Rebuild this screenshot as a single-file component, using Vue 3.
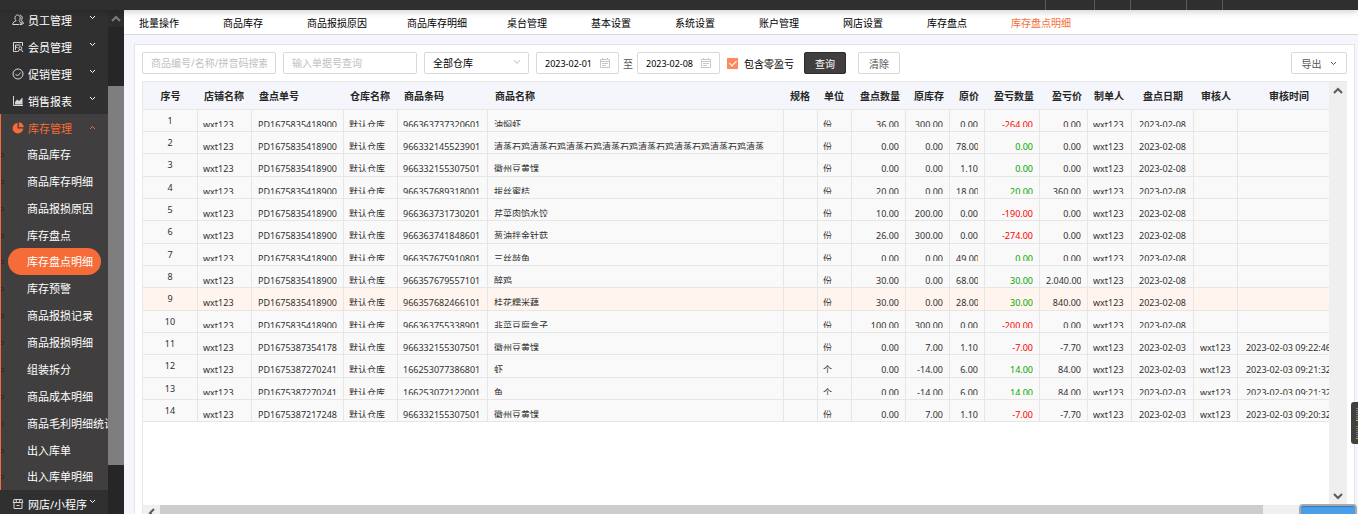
<script setup>
import { ref } from 'vue'

const groups = [
  { label: '员工管理', icon: 'users' },
  { label: '会员管理', icon: 'member' },
  { label: '促销管理', icon: 'check' },
  { label: '销售报表', icon: 'chart' },
  {
    label: '库存管理', icon: 'pie', open: true,
    items: ['商品库存', '商品库存明细', '商品报损原因', '库存盘点', '库存盘点明细', '库存预警', '商品报损记录', '商品报损明细', '组装拆分', '商品成本明细', '商品毛利明细统计', '出入库单', '出入库单明细'],
  },
  { label: '网店/小程序', icon: 'shop' },
]
const current = '库存盘点明细'
const tabs = ['批量操作', '商品库存', '商品报损原因', '商品库存明细', '桌台管理', '基本设置', '系统设置', '账户管理', '网店设置', '库存盘点', '库存盘点明细']

const goods = ref('')
const billNo = ref('')
const warehouse = ref('全部仓库')
const from = ref('2023-02-01')
const to = ref('2023-02-08')
const withZero = ref(true)

const columns = [
  { label: '序号', cls: 'c-seq', align: 'center' },
  { label: '店铺名称', cls: 'c-shop', align: 'left' },
  { label: '盘点单号', cls: 'c-bill', align: 'left', wide: true },
  { label: '仓库名称', cls: 'c-store', align: 'left' },
  { label: '商品条码', cls: 'c-code', align: 'left' },
  { label: '商品名称', cls: 'c-name', align: 'left', wide: true },
  { label: '规格', cls: 'c-spec', align: 'left' },
  { label: '单位', cls: 'c-unit', align: 'left' },
  { label: '盘点数量', cls: 'c-count', align: 'right', wide: true },
  { label: '原库存', cls: 'c-stock', align: 'right', wide: true },
  { label: '原价', cls: 'c-price', align: 'right', wide: true },
  { label: '盈亏数量', cls: 'c-diff', align: 'right', wide: true },
  { label: '盈亏价', cls: 'c-diffprice', align: 'right', wide: true },
  { label: '制单人', cls: 'c-maker', align: 'left' },
  { label: '盘点日期', cls: 'c-date', align: 'center' },
  { label: '审核人', cls: 'c-auditor', align: 'left', wide: true },
  { label: '审核时间', cls: 'c-time', align: 'center' },
]

const first = 'PD1675835418900'
const data = [
  [first, '966363737320601', '油焖虾', '份', '36.00', '300.00', '0.00', '-264.00', '0.00'],
  [first, '966332145523901', '清蒸石鸡清蒸石鸡清蒸石鸡清蒸石鸡清蒸石鸡清蒸石鸡清蒸石鸡清蒸', '份', '0.00', '0.00', '78.00', '0.00', '0.00'],
  [first, '966332155307501', '徽州豆黄馃', '份', '0.00', '0.00', '1.10', '0.00', '0.00'],
  [first, '966357689318001', '拔丝蜜桔', '份', '20.00', '0.00', '18.00', '20.00', '360.00'],
  [first, '966363731730201', '芹菜肉馅水饺', '份', '10.00', '200.00', '0.00', '-190.00', '0.00'],
  [first, '966363741848601', '葱油拌金针菇', '份', '26.00', '300.00', '0.00', '-274.00', '0.00'],
  [first, '966357675910801', '三丝敲鱼', '份', '0.00', '0.00', '49.00', '0.00', '0.00'],
  [first, '966357679557101', '醉鸡', '份', '30.00', '0.00', '68.00', '30.00', '2,040.00'],
  [first, '966357682466101', '桂花糯米藕', '份', '30.00', '0.00', '28.00', '30.00', '840.00'],
  [first, '966363755338901', '韭菜豆腐盒子', '份', '100.00', '300.00', '0.00', '-200.00', '0.00'],
  ['PD1675387354178', '966332155307501', '徽州豆黄馃', '份', '0.00', '7.00', '1.10', '-7.00', '-7.70', '2023-02-03 09:22:46'],
  ['PD1675387270241', '166253077386801', '虾', '个', '0.00', '-14.00', '6.00', '14.00', '84.00', '2023-02-03 09:21:32'],
  ['PD1675387270241', '166253072122001', '鱼', '个', '0.00', '-14.00', '6.00', '14.00', '84.00', '2023-02-03 09:21:32'],
  ['PD1675387217248', '966332155307501', '徽州豆黄馃', '份', '0.00', '7.00', '1.10', '-7.00', '-7.70', '2023-02-03 09:20:32'],
]
const rows = data.map((d, i) => [
  i + 1, 'wxt123', d[0], '默认仓库', d[1], d[2], '', d[3], d[4], d[5], d[6], d[7], d[8],
  'wxt123', d[9] ? '2023-02-03' : '2023-02-08', d[9] ? 'wxt123' : '', d[9] || '',
])
const tone = (value, index) => (index !== 11 ? '' : value.startsWith('-') ? 'loss' : 'gain')
</script>

<template>
  <div class="app">
    <header class="topbar">
      <i class="seg s1"></i><i class="seg s2"></i><i class="seg s3"></i><i class="seg s4"></i><i class="seg s5"></i>
    </header>
    <div class="body">
      <nav class="sidebar">
        <div v-for="g in groups" :key="g.label" class="group" :class="{ open: g.open }">
          <button type="button" class="group-btn">
            <svg class="icon" viewBox="0 0 12 12" fill="none" stroke="currentColor">
              <template v-if="g.icon === 'users'">
                <path d="M4.2 6.8C3.2 6 3 4.9 3 3.9 3 2.2 4.1 1 5.6 1s2.600 1.200 2.600 2.900c0 1-.3 2.100-1.200 2.900M4.200 6.800C2.300 7.400.8 8.300.7 10.500h6.500M7.800 1.200c1.500.1 2.400 1.200 2.400 2.700 0 1.100-.4 2-1.200 2.600 1.300.4 2.200 1.500 2.300 3.500M7.300 7.300l2.600 3.200M9.900 7.800v2.700H7.700" />
              </template>
              <template v-else-if="g.icon === 'member'">
                <path d="M10.500 5V1.500h-9v9h4M3.500 4h5M3.500 6.300h2M3.500 4v5" />
                <circle cx="8.300" cy="7.200" r="1.500" />
                <path d="M6 11c.2-1.600 1-2.300 2.300-2.300s2.200.7 2.400 2.300" />
              </template>
              <template v-else-if="g.icon === 'check'">
                <circle cx="6" cy="6" r="5" /><path d="M3.500 6l2 2 3.300-3.500" />
              </template>
              <template v-else-if="g.icon === 'chart'">
                <path d="M1.500 1v9.500H11" /><path d="M3 9.500V7l2.200-2.500L7 6l3.500-3.500v7z" fill="currentColor" stroke="none" />
              </template>
              <template v-else-if="g.icon === 'pie'">
                <path d="M5.500 1v5.500h5.700A5.300 5.300 0 1 1 5.500 1z" fill="currentColor" stroke="none" />
                <path d="M6.800.3a5.300 5.300 0 0 1 4.900 4.900H6.800z" fill="currentColor" stroke="none" />
              </template>
              <template v-else>
                <path d="M2 1.500h8l.8 3H1.200zM2 5v5.500h8V5M4.300 1.500v3M7.700 1.500v3M4.500 7.500h3" />
              </template>
            </svg>
            <span>{{ g.label }}</span>
            <svg class="caret" viewBox="0 0 7 5" fill="none" stroke="currentColor">
              <path :d="g.open ? 'M1 4l2.500-2.500L6 4' : 'M1 1l2.500 2.500L6 1'" />
            </svg>
          </button>
          <ul v-if="g.items">
            <li v-for="item in g.items" :key="item"><a href="#" :class="{ active: item === current }">{{ item }}</a></li>
          </ul>
        </div>
      </nav>
      <div class="side-scroll">
        <div class="side-up"><svg viewBox="0 0 10 7" fill="none" stroke="#7d7d7d" stroke-width="2"><path d="M1 6l4-4 4 4" /></svg></div>
        <div class="side-thumb"></div>
      </div>

      <main class="main">
        <nav class="tabs">
          <a v-for="t in tabs" :key="t" href="#" :class="{ active: t === current }">{{ t }}</a>
        </nav>
        <section class="card">
          <form class="filters" @submit.prevent>
            <input v-model="goods" class="field text" type="text" aria-label="商品" placeholder="商品编号/名称/拼音码搜索" />
            <input v-model="billNo" class="field text" type="text" aria-label="单据号" placeholder="输入单据号查询" />
            <div class="select-wrap">
              <select v-model="warehouse" class="field" aria-label="仓库"><option>全部仓库</option></select>
              <svg class="select-caret" viewBox="0 0 8 6" fill="none" stroke="#bfbfbf"><path d="M1 1l3 3.500L7 1" /></svg>
            </div>
            <div class="range">
              <div class="field date">
                <input v-model="from" type="text" aria-label="开始日期" />
                <svg viewBox="0 0 10 10" fill="none" stroke="#c8c8c8"><path d="M.5 1.500h9v8h-9zM.5 3.500h9M2.500 0v2M7.500 0v2M2 5.500h6M2 7.500h4" /></svg>
              </div>
              <span>至</span>
              <div class="field date">
                <input v-model="to" type="text" aria-label="结束日期" />
                <svg viewBox="0 0 10 10" fill="none" stroke="#c8c8c8"><path d="M.5 1.500h9v8h-9zM.5 3.500h9M2.500 0v2M7.500 0v2M2 5.500h6M2 7.500h4" /></svg>
              </div>
            </div>
            <label class="check"><input v-model="withZero" type="checkbox" /><span>包含零盈亏</span></label>
            <div class="actions">
              <button type="submit" class="btn primary">查询</button>
              <button type="reset" class="btn">清除</button>
            </div>
            <button type="button" class="btn export">导出
              <svg viewBox="0 0 7 5" fill="none" stroke="currentColor"><path d="M1 1l2.500 2.500L6 1" /></svg>
            </button>
          </form>

          <div class="grid">
            <div class="grid-main">
              <div class="viewport">
                <table>
                  <colgroup><col v-for="c in columns" :key="c.cls" :class="c.cls" /></colgroup>
                  <thead>
                    <tr><th v-for="c in columns" :key="c.label" scope="col" :class="[c.align, { wide: c.wide }]">{{ c.label }}</th></tr>
                  </thead>
                  <tbody>
                    <tr v-for="(row, r) in rows" :key="r" :class="{ hover: r === 8 }">
                      <td v-for="(v, i) in row" :key="i" :class="[columns[i].align, { seq: i === 0, wide: columns[i].wide }]"><div :class="tone(v, i)">{{ v }}</div></td>
                    </tr>
                  </tbody>
                </table>
              </div>
              <div class="vscroll">
                <svg viewBox="0 0 10 7" fill="none" stroke="#5a5a5a" stroke-width="2"><path d="M1 6l4-4 4 4" /></svg>
                <svg viewBox="0 0 10 7" fill="none" stroke="#5a5a5a" stroke-width="2"><path d="M1 1l4 4 4-4" /></svg>
              </div>
            </div>
            <div class="hscroll">
              <svg viewBox="0 0 7 10" fill="none" stroke="#5a5a5a" stroke-width="2"><path d="M6 1L2 5l4 4" /></svg>
              <div class="htrack"><div class="hthumb"></div></div>
            </div>
          </div>
        </section>
      </main>
    </div>
    <div class="meter"><i></i><i class="amber"></i><i></i><i class="green"></i></div>
    <div class="dock"></div>
  </div>
</template>

<style>
body { margin: 0; }
</style>

<style scoped>
.app, .app * { box-sizing: border-box; }
.app {
  position: relative;
  display: flex;
  flex-direction: column;
  height: 100vh;
  overflow: hidden;
  background: #f5f6fb;
  color: #303030;
  font-family: "Noto Sans", "Noto Sans CJK SC", sans-serif;
  font-size: 10px;
}
button, input, select { font: inherit; color: inherit; margin: 0; }
a { color: inherit; text-decoration: none; }
svg { display: block; flex: none; }

.topbar {
  position: relative;
  z-index: 1;
  display: flex;
  justify-content: flex-end;
  flex: none;
  height: 10px;
  padding-right: 135px;
  background: #2f2f2f;
  box-shadow: 0 2px 6px rgba(0, 0, 0, .18);
}
.seg { border-right: 1px solid #5a5a5a; }
.s2 { width: 49px; }
.s3, .s5 { width: 36px; }
.s4 { width: 56px; }

.body { display: flex; flex: 1; min-height: 0; }
.sidebar {
  flex: none;
  width: 108px;
  overflow: hidden;
  background: #303030;
  color: #fff;
  font-size: 11px;
}
.group:first-child { margin-top: -4px; }
.group-btn {
  display: flex;
  align-items: center;
  width: 100%;
  height: 27px;
  padding: 0 12px;
  border: 0;
  background: none;
  text-align: left;
  white-space: nowrap;
}
.group-btn .icon { width: 12px; height: 12px; margin-right: 4px; }
.caret { width: 7px; height: 5px; margin: 0 0 4px auto; }
.open { background: #403e3e; box-shadow: inset 1px 0 #f66c38; }
.open .group-btn { color: #f66c38; }
.open .caret { margin-bottom: 0; }
.group:not(.open) .icon { color: #d8d8d8; }
ul { list-style: none; margin: 0; padding: 0; }
li {
  height: 27px;
  white-space: nowrap;
  background: radial-gradient(circle at 1px 14px, transparent 1px, #2c2b2b 1px 2px, transparent 2px) 1px 0 no-repeat;
}
li:nth-child(8n + 4) { height: 26px; }
li a {
  display: inline-block;
  height: 27px;
  margin-left: 8px;
  padding: 0 8px 0 19px;
  border-radius: 14px;
  line-height: 28px;
}
li a.active { background: #f66c38; }

.side-scroll { flex: none; width: 16px; background: #262626; }
.side-up { display: flex; justify-content: center; align-items: center; height: 17px; background: #2d2d2f; }
.side-up svg { width: 10px; height: 7px; }
.side-thumb { height: 379px; margin-top: 59px; background: #7e7e7e; }

.main { display: flex; flex-direction: column; flex: 1; min-width: 0; }
.tabs {
  display: flex;
  gap: 40px;
  flex: none;
  height: 25px;
  padding-left: 15px;
  border-bottom: 1px solid #d9d9dd;
  background: #fff;
  color: #000;
  line-height: 27px;
  white-space: nowrap;
}
.tabs a { min-width: 44px; }
.tabs .active { color: #f66c38; }

.card {
  display: flex;
  flex-direction: column;
  flex: 1;
  min-height: 0;
  margin: 9px 3px 0 10px;
  padding: 7px 7px 0;
  border: 1px solid #e5e5e8;
  border-bottom: 0;
  background: #fff;
}
.filters { display: flex; align-items: center; gap: 7px; flex: none; height: 22px; margin-bottom: 7px; }
.field {
  height: 22px;
  border: 1px solid #d9d9d9;
  border-radius: 2px;
  background: #fff;
  color: #000;
  padding: 0 8px;
}
.text { width: 134px; }
.text::placeholder { color: #bfbfbf; opacity: 1; }
.select-wrap { position: relative; }
.select-wrap select { appearance: none; width: 105px; }
.select-caret { position: absolute; right: 8px; top: 7px; width: 8px; height: 6px; }
.range { display: flex; align-items: center; gap: 4px; color: #555; }
.date { display: flex; align-items: center; width: 83px; font-size: 9px; }
.date input { flex: 1; width: 0; padding: 0; border: 0; outline: 0; background: none; }
.date svg { width: 10px; height: 10px; }
.check { display: flex; align-items: center; gap: 6px; color: #000; }
.check input { appearance: none; display: grid; place-items: center; width: 11px; height: 11px; border: 1px solid #ccc; }
.check input:checked { border-color: #fd8a5e; background: #fd8a5e; }
.check input:checked::after {
  content: "";
  width: 3px;
  height: 6px;
  margin-bottom: 2px;
  border: solid #fff;
  border-width: 0 1px 1px 0;
  transform: rotate(45deg);
}
.actions { display: flex; gap: 12px; margin-left: 3px; }
.btn {
  display: flex;
  align-items: center;
  justify-content: center;
  width: 42px;
  height: 22px;
  padding: 0;
  border: 1px solid #d9d9d9;
  border-radius: 2px;
  background: #fff;
  color: #555;
}
.primary { border-color: #2c2c2c; background: #403e3e; color: #fff; }
.export { width: 56px; margin-left: auto; gap: 8px; }
.export svg { width: 7px; height: 5px; }

.grid { display: flex; flex-direction: column; flex: 1; min-height: 0; border: solid #e8e8e8; border-width: 1px 0 0 1px; }
.grid-main { display: flex; flex: 1; min-height: 0; }
.viewport { flex: 1; min-width: 0; overflow: hidden; }
table { width: calc(100% + 11px); table-layout: fixed; border-collapse: separate; border-spacing: 0; }
.c-seq, .c-diff { width: 55px; }
.c-shop, .c-store, .c-count { width: 54px; }
.c-bill { width: 92px; }
.c-code { width: 90px; }
.c-spec, .c-unit { width: 34px; }
.c-stock, .c-maker, .c-auditor { width: 44px; }
.c-price { width: 35px; }
.c-diffprice { width: 48px; }
.c-date { width: 62px; }
.c-time { width: 102px; }
th {
  height: 28px;
  padding: 0 6px;
  border-bottom: 1px solid #e8e8e8;
  background: #f5f6fb;
  color: #262626;
  font-weight: 700;
  line-height: 20px;
  white-space: nowrap;
}
th.left.wide { padding-left: 7px; }
td {
  padding: 0 5px;
  border: solid #e6e6e6;
  border-width: 0 1px 1px 0;
  background: #f9f9f9;
  color: #303030;
  font-size: 9px;
  vertical-align: top;
  white-space: nowrap;
}
td.wide { padding: 0 6px; }
.left { text-align: left; }
.right { text-align: right; }
.center { text-align: center; }
tbody tr { height: 22px; }
tbody tr:nth-child(3n) { height: 23px; }
td div { height: 18px; padding-top: 8px; line-height: 13px; overflow: hidden; }
tr:nth-child(3n + 1) td div { height: 17px; }
td.seq div { padding-top: 4px; }
.hover td { background: #fff5ee; }
td .loss { color: #f00; }
td .gain { color: #00a800; }

.vscroll {
  display: flex;
  flex-direction: column;
  align-items: center;
  justify-content: space-between;
  flex: none;
  width: 18px;
  padding: 5px 0;
  background: #efefef;
}
.vscroll svg { width: 10px; height: 7px; }
.hscroll { display: flex; flex: none; height: 9px; padding-right: 35px; overflow: hidden; background: #f0f0f0; }
.hscroll svg { width: 7px; height: 10px; margin: 3px 5px 0; }
.htrack { flex: 1; }
.hthumb { width: calc(100% - 49px); height: 100%; background: #cdcdcd; }

.meter {
  position: absolute;
  z-index: 1;
  right: 0;
  bottom: 70px;
  display: flex;
  flex-direction: column;
  align-items: flex-end;
  width: 7px;
  height: 42px;
  padding-top: 6px;
  border-radius: 3px 0 0 3px;
  background: #404040;
}
.meter i { width: 2px; height: 11px; background: repeating-linear-gradient(#777 0 1px, #404040 1px 2px); }
.meter .amber, .meter .green { height: 1px; margin: 1px 0 5px; background: #f5a623; }
.meter .green { margin-bottom: 0; background: #7ed321; }
.dock {
  position: absolute;
  z-index: 1;
  right: 1px;
  bottom: 0;
  width: 58px;
  height: 10px;
  border: 2px solid #a9a9a9;
  border-bottom: 0;
  border-radius: 4px 4px 0 0;
  background: #4a9de8;
  box-shadow: inset 0 1px #2f7cc4;
}
</style>
